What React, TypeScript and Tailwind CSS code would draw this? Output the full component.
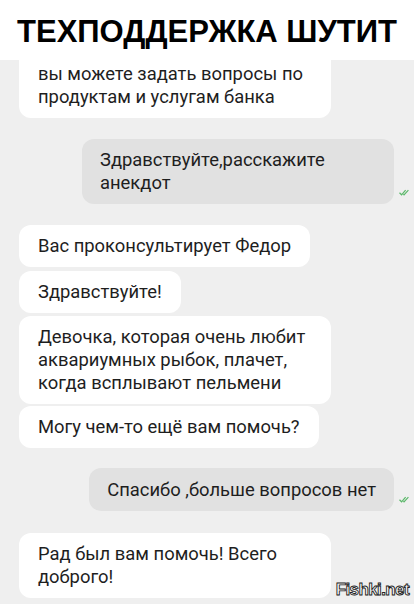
import React from 'react'

const font = { fontFamily: 'Roboto, "Noto Sans", sans-serif' }

function Check() {
  return (
    <svg width="11" height="7" viewBox="0 0 11 7" className="mb-[8px] ml-[5px] shrink-0">
      <path d="M0.5 3.8 L2.6 5.8 L6.6 1.2" stroke="#5bb86a" strokeWidth="1.2" fill="none" />
      <path d="M4.4 5.2 L5 5.8 L9.4 1.2" stroke="#5bb86a" strokeWidth="1.2" fill="none" />
    </svg>
  )
}

function Incoming({ children, className = '' }: { children: React.ReactNode; className?: string }) {
  return (
    <div className={`self-start bg-white rounded-[12px] px-[19px] py-[9.5px] text-[18.4px] leading-[23px] text-[#1e1e1e] ${className}`}>
      {children}
    </div>
  )
}

function Outgoing({ children, className = '' }: { children: React.ReactNode; className?: string }) {
  return (
    <div className={`flex items-end justify-end ${className}`}>
      <div className="bg-[#e1e1e1] rounded-[12px] px-[18px] py-[9.5px] text-[18.4px] leading-[23px] text-[#1e1e1e]">
        {children}
      </div>
      <Check />
    </div>
  )
}

export default function App() {
  return (
    <div className="relative w-[414px] h-[604px] overflow-hidden bg-[#efefef]" style={font}>
      <div className="h-[60px] bg-white flex items-center justify-center pt-[4px]">
        <h1 className="text-[31px] font-bold text-black" style={{ fontFamily: '"Liberation Sans", Arial, sans-serif' }}>
          ТЕХПОДДЕРЖКА ШУТИТ
        </h1>
      </div>

      <div className="flex flex-col pl-[19px] pr-[4px]">
        <Incoming className="w-[312px] pt-[2px] rounded-t-none">
          вы можете задать вопросы по<br />продуктам и услугам банка
        </Incoming>

        <Outgoing className="mt-[21px]">
          <div className="w-[276px]">Здравствуйте,расскажите<br />анекдот</div>
        </Outgoing>

        <Incoming className="mt-[21px]">Вас проконсультирует Федор</Incoming>
        <Incoming className="mt-[4px]">Здравствуйте!</Incoming>
        <Incoming className="mt-[3px] w-[312px]">
          Девочка, которая очень любит<br />аквариумных рыбок, плачет,<br />когда всплывают пельмени
        </Incoming>
        <Incoming className="mt-[2px]">Могу чем-то ещё вам помочь?</Incoming>

        <Outgoing className="mt-[20px]">
          <div className="py-[0.5px]">Спасибо ,больше вопросов нет</div>
        </Outgoing>

        <Incoming className="mt-[22px] w-[312px]">
          Рад был вам помочь! Всего<br />доброго!
        </Incoming>
      </div>

      <div
        className="absolute right-[5px] bottom-[2px] text-[17px] font-bold text-white tracking-[-0.6px] [-webkit-text-stroke:0.9px_#222]"
        style={{ fontFamily: '"Liberation Sans", Arial, sans-serif' }}
      >
        Fishki.net
      </div>
    </div>
  )
}
